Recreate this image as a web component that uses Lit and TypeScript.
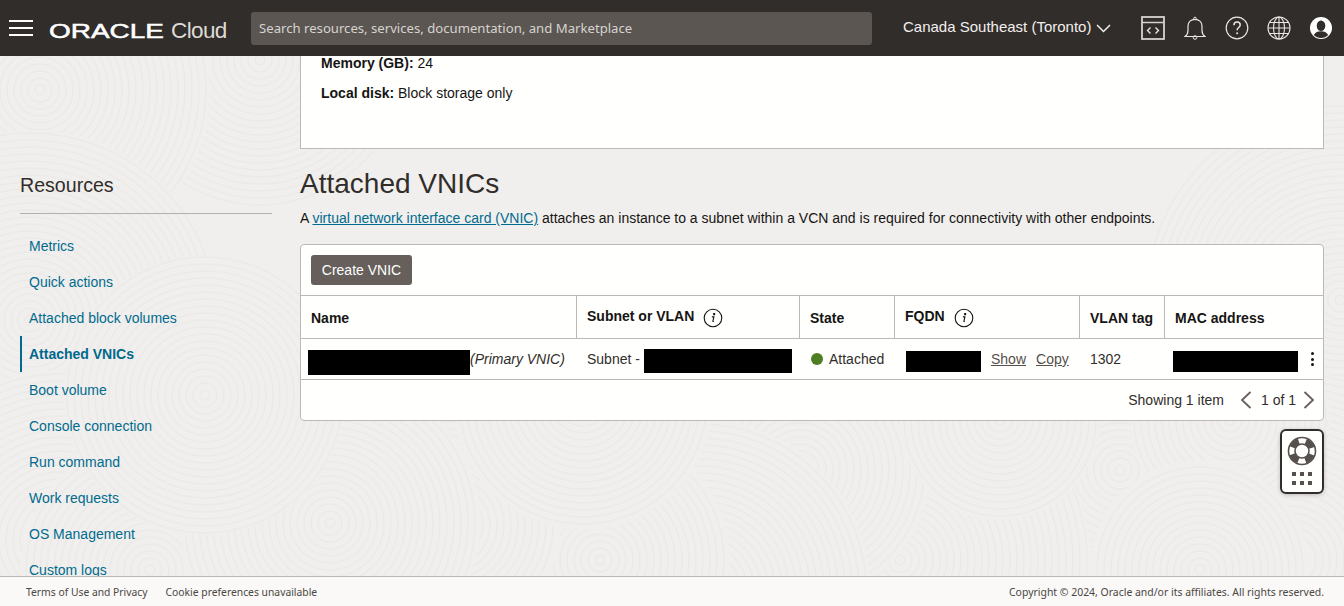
import { LitElement, html, css, svg } from "lit";
import { customElement } from "lit/decorators.js";

const info = svg`<svg class="info" width="20" height="20" viewBox="0 0 20 20"><circle cx="10" cy="10" r="8.8" fill="none" stroke="#161513" stroke-width="1.1"/><path d="M10.7 5.6h.9v1.1h-.9zM8.9 8.9h2l-1 4.1c-.1.5.1.7.9.2" fill="none" stroke="#161513" stroke-width="1.1"/></svg>`;

const NAV = ["Metrics", "Quick actions", "Attached block volumes", "Attached VNICs", "Boot volume", "Console connection", "Run command", "Work requests", "OS Management", "Custom logs"];

// [cx, cy, radius] of each swirl of the backdrop, painted back to front.
const SWIRLS: [number, number, number][] = [
  [1340, 300, 200], [1290, 560, 190], [1120, 470, 170], [900, 560, 190], [800, 470, 130], [700, 590, 170], [600, 560, 130],
  [260, 60, 150], [40, 90, 170], [30, 320, 190], [60, 540, 170], [150, 570, 130], [450, 430, 70], [450, 525, 110], [330, 523, 150],
  [205, 395, 140], [583, 400, 130], [1000, 420, 100], [1230, 420, 100], [1200, 570, 110],
];

const backdrop = () => svg`<svg class="pattern" width="1344" height="520" viewBox="0 56 1344 520" aria-hidden="true">
  ${SWIRLS.map(([cx, cy, r]) => {
    const rings = [];
    for (let q = 5; q < r; q += 7) rings.push(q);
    return svg`<circle cx=${cx} cy=${cy} r=${r} fill="#f1efed"/>${rings.map((q) => svg`<circle cx=${cx} cy=${cy} r=${q} fill="none" stroke="#e8e6e3" stroke-width="1.5" opacity=".55"/>`)}`;
  })}
</svg>`;

@customElement("app-root")
export class AppRoot extends LitElement {
  static styles = css`
    :host { display: flex; flex-direction: column; height: 606px; width: 1344px; overflow: hidden; position: relative; font-family: "Liberation Sans", Arial, sans-serif; font-size: 14px; color: #161513; }
    .top { height: 56px; flex: none; background: #312d2a; display: flex; align-items: center; color: #fff; box-sizing: border-box; padding-left: 9px; position: relative; z-index: 1; }
    .burger { width: 24px; height: 16px; display: flex; flex-direction: column; justify-content: space-between; flex: none; }
    .burger i { height: 2px; background: #fff; display: block; }
    .logo { width: 114px; margin: 6px 0 0 16px; flex: none; height: 24px; display: flex; align-items: center; overflow: visible; }
    .oracle { font-size: 19.4px; font-family: "Liberation Sans", sans-serif; font-weight: 400; -webkit-text-stroke: 0.5px #fff; transform: scale(1.44, 1); transform-origin: left center; white-space: nowrap; color: #fff; display: block; }
    .cloud { font-family: "Liberation Sans", sans-serif; font-size: 22.5px; letter-spacing: -0.6px; margin: 5px 0 0 8px; width: 80px; flex: none; color: #dedbd7; }
    .search { width: 621px; height: 33px; background: #5b5652; border-radius: 3px; box-sizing: border-box; padding: 0 0 2px 8px; display: flex; align-items: center; font-family: "Noto Sans", sans-serif; font-size: 13.15px; color: #d6d3cf; flex: none; margin-top: 1px; }
    .region { margin: 0 0 4px 31px; font-size: 15px; color: #f1efed; width: 193px; flex: none; display: flex; align-items: center; gap: 5px; white-space: nowrap; }
    .region svg { flex: none; margin-top: 5px; }
    .icons { display: flex; align-items: center; gap: 0; }
    .icons svg { display: block; flex: none; }
    .ic1 { margin-left: 45px; }
    .ic2 { margin-left: 19px; }
    .ic3 { margin-left: 19px; }
    .ic4 { margin-left: 18px; }
    .ic5 { margin-left: 19px; }
    .pattern { position: absolute; left: 0; top: 0; display: block; }
    .main { flex: 1; min-height: 0; overflow: hidden; display: flex; gap: 28px; padding: 0 20px; background-color: #f1efed; position: relative; }
    .side, .content { position: relative; }
    .side { width: 252px; flex: none; }
    .side h2 { margin: 116px 0 0; font-weight: 400; font-size: 19.6px; line-height: 26px; height: 41px; border-bottom: 1px solid #b5b0aa; color: #312d2a; }
    .side ul { list-style: none; margin: 14px 0 0; padding: 0; }
    .side li { height: 36px; display: flex; align-items: center; padding-left: 9px; color: #006b8f; font-size: 14px; box-sizing: border-box; }
    .side li.on { font-weight: 700; border-left: 2px solid #006b8f; padding-left: 7px; color: #00688c; }
    .content { flex: 1; min-width: 0; }
    .card { height: 93px; box-sizing: border-box; background: #fffffe; border: 1px solid #bdb9b4; border-top: 0; padding-left: 20px; }
    .card p { margin: 0 0 16px; line-height: 14px; color: #161513; }
    h1 { font-weight: 400; font-size: 28px; line-height: 34px; margin: 18px 0 0; color: #312d2a; }
    .desc { margin: 7px 0 0; line-height: 20px; color: #161513; height: 20px; }
    .desc a { color: #006b8f; text-decoration: underline; }
    .panel { margin-top: 16px; background: #fffffd; border: 1px solid #bdb9b4; border-radius: 4px; height: 177px; box-sizing: border-box; }
    .bar { border-bottom: 1px solid #bdb9b4; padding: 10px; height: 30px; }
    .btn { width: 101px; height: 30px; border-radius: 3px; background: #665f5b; color: #fff; display: flex; align-items: center; justify-content: center; font-size: 14px; box-sizing: border-box; }
    .grid { display: grid; grid-template-columns: 276px 223px 95px 185px 85px 158px; }
    .th { border-bottom: 1px solid #bdb9b4; border-right: 1px solid #bdb9b4; padding: 1px 0 0 10px; display: flex; align-items: center; font-weight: 700; color: #161513; gap: 9px; box-sizing: border-box; height: 43px; }
    .th span.up { margin-bottom: 4px; }
    .th.last { border-right: 0; }
    .td { height: 41px; box-sizing: border-box; border-bottom: 1px solid #bdb9b4; display: flex; align-items: center; padding-left: 10px; color: #312d2a; white-space: nowrap; position: relative; }
    .red { background: #000; display: block; flex: none; }
    .r1 { width: 162px; height: 25px; margin: 6px 0 0 -3px; }
    .r2 { width: 148px; height: 24px; margin: 3px 0 0 4px; }
    .r3 { width: 75px; height: 21px; margin: 4px 0 0 1px; }
    .r4 { width: 125px; height: 21px; margin: 4px 0 0 -2px; }
    .dot { width: 12px; height: 12px; background: #4f7d21; border-radius: 50%; margin-left: 1px; margin-right: 6px; flex: none; }
    .link { text-decoration: underline; color: #55504c; }
    .show { margin-left: 10px; }
    .copy { margin-left: 10px; }
    .kebab { position: absolute; right: 9px; top: 13px; display: flex; flex-direction: column; gap: 2.5px; }
    .kebab i { width: 3px; height: 3px; background: #161513; border-radius: 50%; display: block; }
    .foot { height: 40px; display: flex; align-items: center; justify-content: flex-end; padding-right: 8px; color: #312d2a; box-sizing: border-box; }
    .foot .pg { margin: 0 0 0 16px; display: flex; align-items: center; gap: 9px; }
    .foot .pg span { margin-right: -2px; }
    .foot svg { display: block; }
    .help { position: absolute; left: 1280px; top: 429px; width: 44px; height: 65px; box-sizing: border-box; border: 2px solid #312d2a; border-radius: 6px; background: #fffffd; display: flex; flex-direction: column; align-items: center; box-shadow: 0 1px 4px rgba(0,0,0,.2); z-index: 2; }
    .help svg { display: block; flex: none; }
    .bottom { height: 30px; flex: none; background: #faf9f7; border-top: 1px solid #bdb9b4; box-sizing: border-box; display: flex; align-items: center; font-family: "Noto Sans", sans-serif; font-size: 10.33px; color: #4a4643; padding: 0 20px 0 26px; position: relative; z-index: 1; }
    .bottom span + span { margin-left: 18px; }
    .bottom .copyr { margin-left: auto !important; font-size: 10.45px; }
  `;

  render() {
    return html`
      <div class="top">
        <div class="burger"><i></i><i></i><i></i></div>
        <div class="logo"><span class="oracle">ORACLE</span></div>
        <div class="cloud">Cloud</div>
        <div class="search">Search resources, services, documentation, and Marketplace</div>
        <div class="region">Canada Southeast (Toronto)
          <svg width="15" height="9" viewBox="0 0 15 9"><path d="M1 1l6.500 6.500L14 1" fill="none" stroke="#f1efed" stroke-width="1.500"/></svg>
        </div>
        <div class="icons">
          <svg class="ic1" width="24" height="24" viewBox="0 0 24 24"><rect x="1" y="1" width="22" height="22" fill="none" stroke="#d6d3cf" stroke-width="1.800"/><path d="M1 6.500h22" stroke="#d6d3cf" stroke-width="1.500"/><path d="M9.500 11.500L6.500 14.500l3 3M14.500 11.500l3 3-3 3" fill="none" stroke="#e8e6e3" stroke-width="1.400"/></svg>
          <svg class="ic2" width="22" height="24" viewBox="0 0 22 24"><path d="M1 20.500c2.200-1.600 3-3.400 3-6V10c0-3.900 3-6.700 7-6.700s7 2.800 7 6.700v4.500c0 2.600.8 4.400 3 6z" fill="none" stroke="#e8e6e3" stroke-width="1.200"/><circle cx="11" cy="2.500" r="1.300" fill="none" stroke="#e8e6e3" stroke-width="1"/><circle cx="11" cy="21.500" r="1.800" fill="none" stroke="#e8e6e3" stroke-width="1"/></svg>
          <svg class="ic3" width="24" height="24" viewBox="0 0 24 24"><circle cx="12" cy="12" r="10.800" fill="none" stroke="#e8e6e3" stroke-width="1.200"/><path d="M8.900 9.300c0-2 1.400-3.200 3.200-3.200s3.100 1.100 3.100 2.900c0 2.600-3.100 2.500-3.100 5.300" fill="none" stroke="#e8e6e3" stroke-width="1.500"/><circle cx="12.100" cy="17.300" r="1" fill="#e8e6e3"/></svg>
          <svg class="ic4" width="24" height="24" viewBox="0 0 24 24" fill="none" stroke="#e8e6e3" stroke-width="1.100"><circle cx="12" cy="12" r="11"/><ellipse cx="12" cy="12" rx="5.500" ry="11"/><path d="M12 1v22M1.200 12h21.600M2.700 6.500h18.600M2.700 17.500h18.600"/></svg>
          <svg class="ic5" width="22" height="22" viewBox="0 0 22 22"><circle cx="11" cy="11" r="11" fill="#fff"/><ellipse cx="11" cy="8.800" rx="4.300" ry="5.300" fill="#312d2a"/><path d="M3.800 18c1.600-2.800 4-3.700 7.200-3.700s5.600.9 7.200 3.700c-1.800 1.900-4.400 3-7.200 3s-5.400-1.100-7.200-3z" fill="#312d2a"/></svg>
        </div>
      </div>
      <div class="main">
        ${backdrop()}
        <div class="side">
          <h2>Resources</h2>
          <ul>${NAV.map((n, i) => html`<li class=${i === 3 ? "on" : ""}>${n}</li>`)}</ul>
        </div>
        <div class="content">
          <div class="card">
            <p><b>Memory (GB):</b> 24</p>
            <p><b>Local disk:</b> Block storage only</p>
          </div>
          <h1>Attached VNICs</h1>
          <p class="desc">A <a>virtual network interface card (VNIC)</a> attaches an instance to a subnet within a VCN and is required for connectivity with other endpoints.</p>
          <div class="panel">
            <div class="bar"><div class="btn">Create VNIC</div></div>
            <div class="grid">
              <div class="th">Name</div>
              <div class="th"><span class="up">Subnet or VLAN</span>${info}</div>
              <div class="th">State</div>
              <div class="th"><span class="up">FQDN</span>${info}</div>
              <div class="th">VLAN tag</div>
              <div class="th last">MAC address</div>
              <div class="td"><span class="red r1"></span><i>(Primary VNIC)</i></div>
              <div class="td">Subnet - <span class="red r2"></span></div>
              <div class="td"><span class="dot"></span>Attached</div>
              <div class="td"><span class="red r3"></span><span class="link show">Show</span><span class="link copy">Copy</span></div>
              <div class="td">1302</div>
              <div class="td"><span class="red r4"></span><span class="kebab"><i></i><i></i><i></i></span></div>
            </div>
            <div class="foot">Showing 1 item
              <div class="pg">
                <svg width="12" height="18" viewBox="0 0 12 18"><path d="M10.500 1L2 9l8.500 8" fill="none" stroke="#665f5b" stroke-width="1.800"/></svg>
                <span>1 of 1</span>
                <svg width="12" height="18" viewBox="0 0 12 18"><path d="M1.500 1L10 9l-8.500 8" fill="none" stroke="#665f5b" stroke-width="1.800"/></svg>
              </div>
            </div>
          </div>
        </div>
      </div>
      <div class="bottom"><span>Terms of Use and Privacy</span><span>Cookie preferences unavailable</span><span class="copyr">Copyright © 2024, Oracle and/or its affiliates. All rights reserved.</span></div>
      <div class="help">
        <svg width="30" height="30" viewBox="0 0 30 30" style="margin-top:5px">
          <circle cx="15" cy="15" r="13.500" fill="none" stroke="#55504c" stroke-width="1.600"/>
          <circle cx="15" cy="15" r="7" fill="none" stroke="#55504c" stroke-width="1.600"/>
          <circle cx="15" cy="15" r="10.200" fill="none" stroke="#55504c" stroke-width="6" stroke-dasharray="8.900 7.120" stroke-dashoffset="-3.560"/>
        </svg>
        <svg width="20" height="13" viewBox="0 0 20 13" style="margin-top:6px" fill="#55504c"><rect width="4" height="4" y="0" x="0"/><rect width="4" height="4" y="0" x="8"/><rect width="4" height="4" y="0" x="16"/><rect width="4" height="4" y="9" x="0"/><rect width="4" height="4" y="9" x="8"/><rect width="4" height="4" y="9" x="16"/></svg>
      </div>
    `;
  }
}
